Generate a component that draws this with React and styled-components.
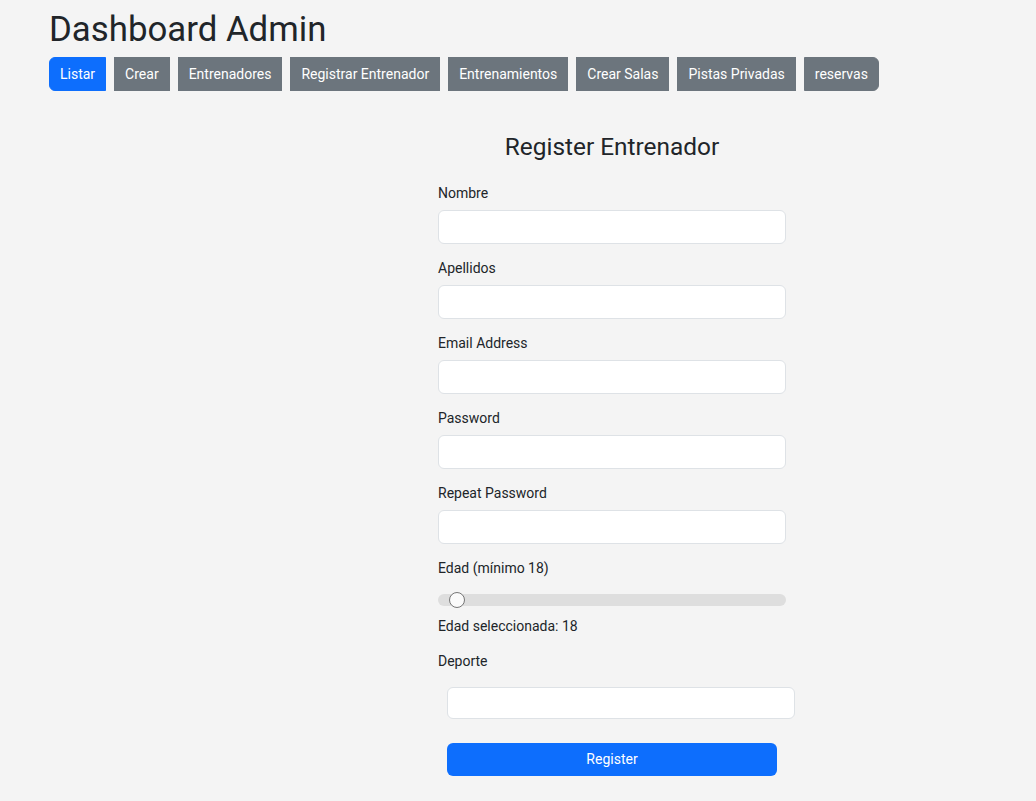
import React, { useState } from "react";
import { styled, createGlobalStyle } from "styled-components";

const GlobalStyle = createGlobalStyle`
  html, body {
    margin: 0;
    padding: 0;
    background: #f4f4f4;
    color: #212529;
    font-family: Roboto, "Liberation Sans", sans-serif;
  }
  * {
    box-sizing: border-box;
  }
`;

const tabs = [
  "Listar",
  "Crear",
  "Entrenadores",
  "Registrar Entrenador",
  "Entrenamientos",
  "Crear Salas",
  "Pistas Privadas",
  "reservas",
];

const fields = [
  { label: "Nombre", type: "text" },
  { label: "Apellidos", type: "text" },
  { label: "Email Address", type: "email" },
  { label: "Password", type: "password" },
  { label: "Repeat Password", type: "password" },
];

export default function App() {
  const [edad, setEdad] = useState(18);

  return (
    <>
      <GlobalStyle />
      <Page>
        <Title>Dashboard Admin</Title>
        <Nav>
          {tabs.map((t, i) => (
            <NavButton
              key={t}
              $active={i === 0}
              $first={i === 0}
              $last={i === tabs.length - 1}
            >
              {t}
            </NavButton>
          ))}
        </Nav>

        <Form onSubmit={(e) => e.preventDefault()}>
          <FormTitle>Register Entrenador</FormTitle>
          {fields.map((f) => (
            <Field key={f.label}>
              <Label>{f.label}</Label>
              <Input type={f.type} />
            </Field>
          ))}
          <Label>Edad (mínimo 18)</Label>
          <Range
            type="range"
            min={18}
            max={99}
            value={edad}
            onChange={(e) => setEdad(e.target.value)}
          />
          <Selected>Edad seleccionada: {edad}</Selected>
          <Label>Deporte</Label>
          <Indented>
            <Input type="text" $small />
            <Submit type="submit">Register</Submit>
          </Indented>
        </Form>
      </Page>
    </>
  );
}

const Page = styled.div`
  padding: 9px 49px 24px;
`;

const Title = styled.h1`
  margin: 0;
  font-size: 34.8px;
  font-weight: 400;
  line-height: 1.2;
`;

const Nav = styled.div`
  display: flex;
  gap: 8px;
  margin-top: 6px;
`;

const NavButton = styled.button`
  height: 34px;
  padding: 0 10px;
  border: 1px solid ${(p) => (p.$active ? "#0d6efd" : "#6c757d")};
  background: ${(p) => (p.$active ? "#0d6efd" : "#6c757d")};
  color: #fff;
  font-family: inherit;
  font-size: 14px;
  border-radius: ${(p) =>
    p.$first ? "6px 0 0 6px" : p.$last ? "0 6px 6px 0" : "0"};
  cursor: pointer;
`;

const Form = styled.form`
  width: 348px;
  margin: 41px 0 0 389px;
  display: flex;
  flex-direction: column;
`;

const FormTitle = styled.h4`
  margin: 0 0 21.6px;
  text-align: center;
  font-size: 24.4px;
  font-weight: 400;
  line-height: 1.2;
`;

const Field = styled.div`
  display: flex;
  flex-direction: column;
  margin-bottom: 14px;
`;

const Label = styled.label`
  font-size: 14px;
  line-height: 21px;
  margin-bottom: 6px;
`;

const Input = styled.input`
  width: 348px;
  height: ${(p) => (p.$small ? "32px" : "34px")};
  border: 1px solid #dee2e6;
  border-radius: 6px;
  background: #fff;
  padding: 4px 10px;
  font-size: 14px;
  font-family: inherit;
  outline: none;
`;

const Range = styled.input`
  -webkit-appearance: none;
  appearance: none;
  width: 100%;
  height: 12px;
  margin: 9px 0 10px;
  border-radius: 6px;
  background: #dedede;
  outline: none;

  &::-webkit-slider-thumb {
    -webkit-appearance: none;
    width: 16px;
    height: 16px;
    border-radius: 50%;
    background: #fafafa;
    border: 1px solid #767676;
    margin-left: 11px;
    cursor: pointer;
  }
`;

const Selected = styled.p`
  margin: 0 0 14px;
  font-size: 14px;
  line-height: 21px;
`;

const Indented = styled.div`
  display: flex;
  flex-direction: column;
  align-items: flex-start;
  gap: 24px;
  padding: 9px 0 0 9px;
`;

const Submit = styled.button`
  width: 330px;
  height: 33px;
  border: none;
  border-radius: 6px;
  background: #0d6efd;
  color: #fff;
  font-size: 14px;
  font-family: inherit;
  cursor: pointer;
`;
